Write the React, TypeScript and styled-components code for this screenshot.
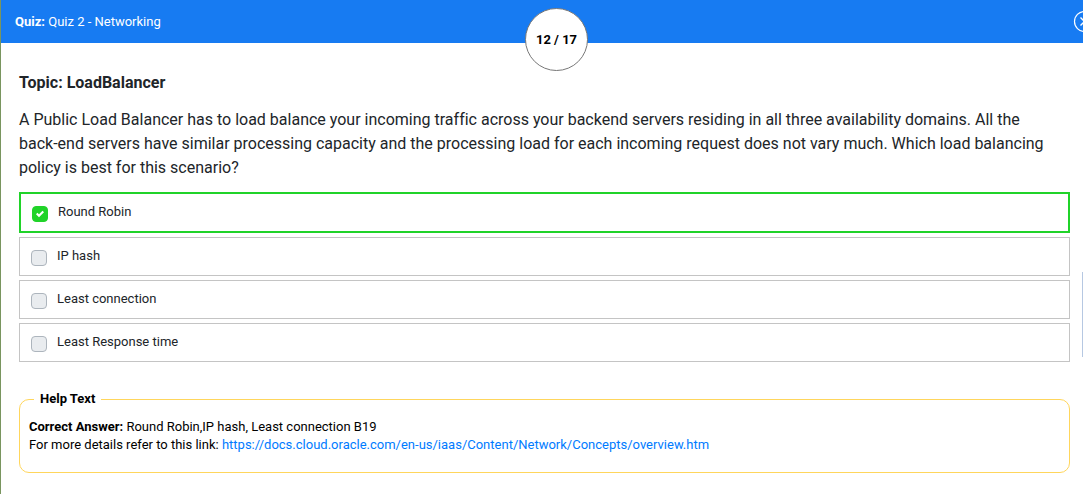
import React, { useState } from "react";
import styled, { createGlobalStyle } from "styled-components";

const GlobalStyle = createGlobalStyle`
  *, *::before, *::after { box-sizing: border-box; }
  body {
    margin: 0;
    background: #fff;
    color: #212529;
    font-family: Roboto, "Liberation Sans", sans-serif;
    font-size: 13px;
    line-height: 18px;
    text-rendering: optimizeSpeed;
    overflow-x: hidden;
  }
`;

const Page = styled.main`
  position: relative;
  min-height: 100vh;
  border-left: 1px solid #79955f;
  overflow: hidden;
`;

const Header = styled.header`
  position: relative;
  display: flex;
  align-items: center;
  justify-content: space-between;
  height: 43px;
  padding-left: 14px;
  background: #177bf2;
  color: #fff;
`;

const QuizName = styled.h1`
  margin: 0;
  font-size: 13px;
  font-weight: 400;
`;

const Counter = styled.div`
  position: absolute;
  top: 8px;
  left: 50%;
  display: flex;
  align-items: center;
  justify-content: center;
  width: 63px;
  height: 63px;
  margin-left: -17px;
  border: 1px solid #777;
  border-radius: 50%;
  background: #fff;
  color: #000;
  font-weight: 700;
`;

const CloseButton = styled.button`
  display: flex;
  flex: none;
  margin: 0 -12px 0 0;
  padding: 0;
  border: 0;
  background: none;
  color: #fff;
  cursor: pointer;
`;

const Content = styled.div`
  padding: 30px 13px 21px 18px;
`;

const Topic = styled.h2`
  margin: 0 0 16px;
  font-size: 16px;
  font-weight: 700;
  line-height: 19px;
`;

const Question = styled.legend`
  margin: 0 0 12px;
  padding: 0 14px 0 0;
  font-size: 16px;
  line-height: 24px;
`;

const Options = styled.fieldset`
  display: flex;
  flex-direction: column;
  gap: 4px;
  min-width: 0;
  margin: 0;
  padding: 0;
  border: 0;
`;

const Option = styled.label<{ $selected: boolean }>`
  display: flex;
  align-items: flex-start;
  gap: 10px;
  padding: 9px 11px;
  border: ${(p) => (p.$selected ? "2px solid #20d329" : "1px solid #c4c4c4")};
  cursor: pointer;
`;

const Tick = styled.span`
  display: grid;
  flex: none;
  margin-top: 3px;
  svg { grid-area: 1 / 1; place-self: center; pointer-events: none; }
`;

const Checkbox = styled.input`
  grid-area: 1 / 1;
  appearance: none;
  width: 16px;
  height: 16px;
  margin: 0;
  border: 1px solid #adb5bd;
  border-radius: 4px;
  background: #e9ecef;
  cursor: pointer;
  &:checked { border-color: #20d329; background: #20d329; }
`;

const Help = styled.fieldset`
  min-width: 0;
  margin: 28px 0 0;
  padding: 10px 9px 18px;
  border: 1px solid #ffd65c;
  border-radius: 10px;
  color: #000;
`;

const HelpTitle = styled.legend`
  margin-left: 5px;
  padding: 0 6px;
  font-weight: 700;
`;

const Line = styled.p`
  margin: 0;
`;

const Link = styled.a`
  color: #007bff;
  text-decoration: none;
`;

const SideTab = styled.div`
  position: absolute;
  top: 272px;
  right: 0;
  width: 1px;
  height: 85px;
  background: #b6c8e2;
`;

const choices = ["Round Robin", "IP hash", "Least connection", "Least Response time"];

export default function App() {
  const [selected, setSelected] = useState<string[]>(["Round Robin"]);
  const toggle = (choice: string) =>
    setSelected((current) =>
      current.includes(choice) ? current.filter((c) => c !== choice) : [...current, choice]
    );

  return (
    <>
      <GlobalStyle />
      <Page>
        <Header>
          <QuizName><b>Quiz:</b> Quiz 2 - Networking</QuizName>
          <Counter>12 / 17</Counter>
          <CloseButton type="button" aria-label="Close quiz">
            <svg width="22" height="22" viewBox="0 0 22 22" fill="none" stroke="currentColor" strokeWidth="1.2">
              <circle cx="11.5" cy="10.5" r="10" />
              <path d="M7.5 6.5l8 8M15.5 6.5l-8 8" strokeWidth="1.4" />
            </svg>
          </CloseButton>
        </Header>
        <Content>
          <Topic>Topic: LoadBalancer</Topic>
          <Options>
            <Question>
              A Public Load Balancer has to load balance your incoming traffic across your backend
              servers residing in all three availability domains. All the back-end servers have
              similar processing capacity and the processing load for each incoming request does not
              vary much. Which load balancing policy is best for this scenario?
            </Question>
            {choices.map((choice) => (
              <Option key={choice} $selected={selected.includes(choice)}>
                <Tick>
                  <Checkbox
                    type="checkbox"
                    checked={selected.includes(choice)}
                    onChange={() => toggle(choice)}
                  />
                  {selected.includes(choice) && (
                    <svg width="8" height="8" viewBox="0 0 8 8" aria-hidden="true">
                      <path fill="#fff" d="M6.564.75l-3.59 3.612-1.538-1.55L0 4.26 2.974 7.25 8 2.193z" />
                    </svg>
                  )}
                </Tick>
                {choice}
              </Option>
            ))}
          </Options>
          <Help>
            <HelpTitle>Help Text</HelpTitle>
            <Line><b>Correct Answer:</b> Round Robin,IP hash, Least connection B19</Line>
            <Line>
              For more details refer to this link:{" "}
              <Link href="https://docs.cloud.oracle.com/en-us/iaas/Content/Network/Concepts/overview.htm">
                https://docs.cloud.oracle.com/en-us/iaas/Content/Network/Concepts/overview.htm
              </Link>
            </Line>
          </Help>
        </Content>
        <SideTab />
      </Page>
    </>
  );
}
